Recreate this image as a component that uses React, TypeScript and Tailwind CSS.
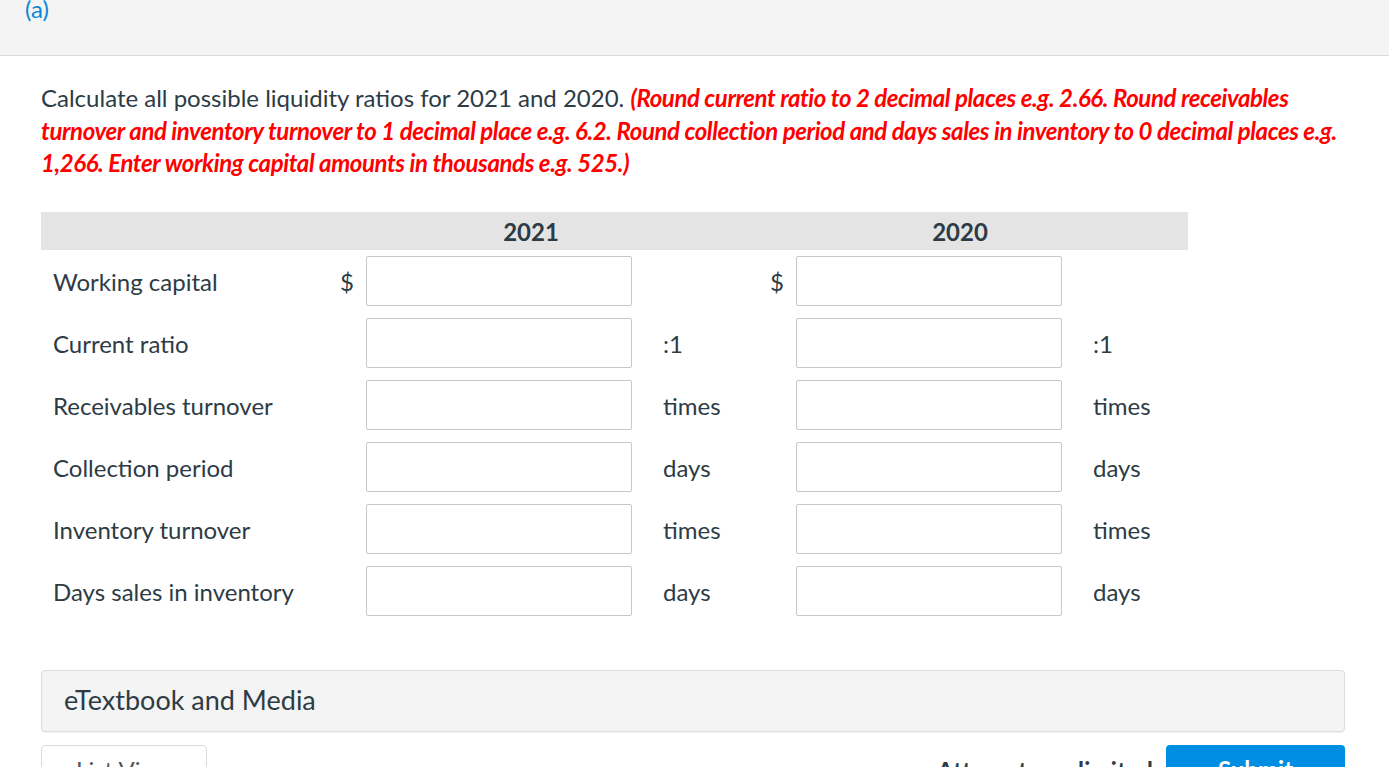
import React from "react";

const rows: { label: string; dollar: boolean; unit: string }[] = [
  { label: "Working capital", dollar: true, unit: "" },
  { label: "Current ratio", dollar: false, unit: ":1" },
  { label: "Receivables turnover", dollar: false, unit: "times" },
  { label: "Collection period", dollar: false, unit: "days" },
  { label: "Inventory turnover", dollar: false, unit: "times" },
  { label: "Days sales in inventory", dollar: false, unit: "days" },
];

export default function App() {
  return (
    <div
      className="w-[1389px] h-[767px] overflow-hidden bg-white text-[#2d3b45]"
      style={{ fontFamily: "Lato, 'Noto Sans', sans-serif" }}
    >
      <div className="h-[56px] bg-[#f4f4f4] border-b border-[#dcdcdc] px-[25px] overflow-hidden">
        <div className="text-[24px] leading-[24px] text-[#0a86d6] mt-[-3px]">(a)</div>
      </div>

      <div className="px-[41px] pr-[44px]">
        <p className="mt-[26px] mr-[-6px] text-[24px] leading-[32.5px]">
          Calculate all possible liquidity ratios for 2021 and 2020.{" "}
          <span className="text-[#ff0000] font-bold italic tracking-[-0.4px]">
            (Round current ratio to 2 decimal places e.g. 2.66. Round receivables turnover and inventory turnover to 1 decimal place e.g. 6.2. Round collection period and days sales in inventory to 0 decimal places e.g. 1,266. Enter working capital amounts in thousands e.g. 525.)
          </span>
        </p>

        <div className="mt-[32px] w-[1147px] grid grid-cols-[289px_36px_266px_100px_64px_266px_126px]">
          <div className="bg-[#e4e4e4] h-[38px]" />
          <div className="col-span-3 bg-[#e4e4e4] h-[38px] flex items-center justify-center pt-[2px] text-[24px] font-bold">
            2021
          </div>
          <div className="col-span-3 bg-[#e4e4e4] h-[38px] flex items-center justify-center pt-[2px] text-[24px] font-bold">
            2020
          </div>

          {rows.map((r) => (
            <React.Fragment key={r.label}>
              <div className="h-[62px] flex items-center pl-[12px] pt-[2px] text-[24px]">{r.label}</div>
              <div className="h-[62px] flex items-center justify-end pr-[12px] pt-[2px] text-[24px]">
                {r.dollar ? "$" : ""}
              </div>
              <div className="h-[62px] flex items-center">
                <div className="w-[266px] h-[50px] border border-[#c8c8c8] rounded-[2px] bg-white" />
              </div>
              <div className="h-[62px] flex items-center pl-[31px] pt-[2px] text-[24px]">{r.unit}</div>
              <div className="h-[62px] flex items-center justify-end pr-[12px] pt-[2px] text-[24px]">
                {r.dollar ? "$" : ""}
              </div>
              <div className="h-[62px] flex items-center">
                <div className="w-[266px] h-[50px] border border-[#c8c8c8] rounded-[2px] bg-white" />
              </div>
              <div className="h-[62px] flex items-center pl-[31px] pt-[2px] text-[24px]">{r.unit}</div>
            </React.Fragment>
          ))}
        </div>

        <div className="mt-[48px] h-[62px] bg-[#f4f4f4] border border-[#dcdcdc] rounded-[4px] flex items-center pl-[22px] text-[27px] shadow-[0_1px_1px_rgba(0,0,0,0.05)]">
          eTextbook and Media
        </div>

        <div className="mt-[13px] flex items-start">
          <div className="w-[166px] h-[50px] border border-[#dcdcdc] rounded-[4px] bg-white flex items-center justify-center text-[24px] text-[#555]">
            List View
          </div>
          <div className="flex-1" />
          <div className="mt-[8px] mr-[13px] text-[24px] font-bold tracking-[0.2px]">Attempts: unlimited</div>
          <div className="w-[179px] h-[50px] rounded-[4px] bg-[#008ee2] text-white flex items-center justify-center text-[24px] font-bold">
            Submit
          </div>
        </div>
      </div>
    </div>
  );
}
